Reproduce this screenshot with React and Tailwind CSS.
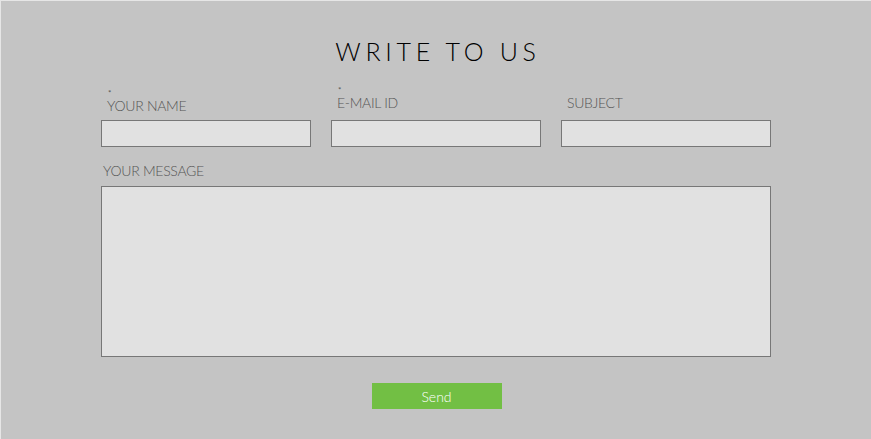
import React from "react";

const Field = ({ label, required, labelClass }) => (
  <div className="flex w-[210px] flex-col">
    <div className={`flex h-[31px] flex-col justify-end ${labelClass}`}>
      {required && (
        <div className="mb-[2px] ml-[1px] h-[8px] text-[8px] leading-[8px] text-[#555]">*</div>
      )}
      <div className="text-[14px] leading-[14px] font-light tracking-[-0.3px] text-[#555]">{label}</div>
    </div>
    <input className="h-[27px] w-full border border-[#777] bg-[#e1e1e1] outline-none" />
  </div>
);

const App = () => {
  return (
    <div className="h-[439px] w-[871px] border-l border-t border-[#e6e6e6] bg-[#c4c4c4] font-['Lato',sans-serif]">
      <div className="flex flex-col items-center pt-[36px]">
        <h1 className="pl-[4px] text-[25px] leading-[28px] font-light tracking-[4.7px] text-black">
          WRITE TO US
        </h1>
      </div>
      <div className="ml-[100px] mt-[24px] w-[670px]">
        <div className="flex gap-[20px]">
          <Field label="YOUR NAME" required labelClass="pl-[6px] pb-[7px]" />
          <Field label="E-MAIL ID" required labelClass="pl-[6px] pb-[10px]" />
          <Field label="SUBJECT" labelClass="pl-[6px] pb-[10px]" />
        </div>
        <div className="mt-[16px] pl-[2px] text-[14px] leading-[16px] font-light tracking-[-0.3px] text-[#555]">
          YOUR MESSAGE
        </div>
        <textarea className="mt-[7px] block h-[171px] w-full resize-none border border-[#777] bg-[#e1e1e1] outline-none" />
        <div className="mt-[26px] flex justify-center">
          <button className="ml-[1px] h-[26px] w-[130px] bg-[#72bf44] text-[14px] font-light text-white">
            Send
          </button>
        </div>
      </div>
    </div>
  );
};

export default App;
